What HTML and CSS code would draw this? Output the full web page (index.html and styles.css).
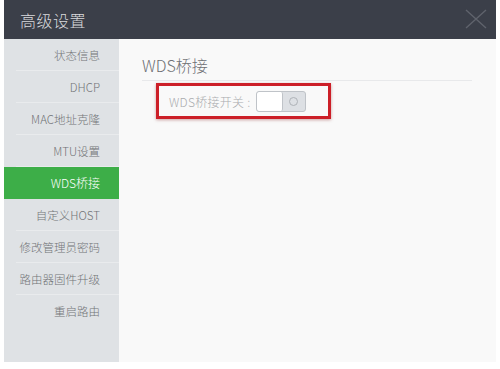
FILE: index.html
```html
<!DOCTYPE html>
<html>
<head>
<meta charset="utf-8">
<link rel="stylesheet" href="styles.css">
</head>
<body>
<div class="dialog">
  <div class="header">
    <span class="title">高级设置</span>
    <span class="close"><svg width="22" height="20" viewBox="0 0 22 20"><path d="M1 1L21 19M21 1L1 19" stroke="#5f636c" stroke-width="1.4" fill="none"/></svg></span>
  </div>
  <div class="main">
    <ul class="menu">
      <li>状态信息</li>
      <li>DHCP</li>
      <li>MAC地址克隆</li>
      <li>MTU设置</li>
      <li class="active">WDS桥接</li>
      <li>自定义HOST</li>
      <li>修改管理员密码</li>
      <li>路由器固件升级</li>
      <li class="last">重启路由</li>
    </ul>
    <div class="content">
      <h2 class="section">WDS桥接</h2>
      <div class="highlight">
        <span class="label">WDS桥接开关 :</span>
        <span class="switch"><span class="knob"></span><span class="off"><span class="ring"></span></span></span>
      </div>
    </div>
  </div>
</div>
</body>
</html>
```
FILE: styles.css
```css
html, body { margin: 0; padding: 0; background: #ffffff; }
body { font-family: "Microsoft YaHei", "Noto Sans CJK SC", "Liberation Sans", sans-serif; font-weight: 300; width: 500px; height: 369px; overflow: hidden; }
.dialog { margin: 0 4px; width: 492px; }
.header { height: 39px; background: #3b3f49; display: flex; align-items: center; justify-content: space-between; padding: 0 9px 0 16px; box-sizing: border-box; }
.title { color: #d9dadd; font-size: 16px; letter-spacing: 0.5px; }
.close { display: flex; width: 22px; height: 20px; margin-top: -2px; }
.main { display: flex; height: 323px; background: #f9f9f9; }
.menu { list-style: none; margin: 0; padding: 0; width: 115px; background: #dfe2e5; }
.menu li { height: 32px; line-height: 32px; text-align: right; padding-right: 19px; font-size: 11.5px; color: #727477; border-bottom: 1px solid #e9ebed; margin-left: 12px; box-sizing: border-box; }
.menu li.last { border-bottom: none; }
.menu li.active { background: #3dae48; color: #ffffff; margin-left: 0; border-bottom-color: #3dae48; font-size: 12px; }
.content { flex: 1; padding: 16px 24px 0 23px; }
.section { margin: 0; font-weight: 300; font-size: 16px; color: #6e7074; line-height: 20px; padding-bottom: 5px; border-bottom: 1px solid #e8e9eb; }
.highlight { margin: 2px 0 0 14px; width: 175px; height: 36px; box-sizing: border-box; border: 3px solid #cc1f28; box-shadow: 0 1px 3px rgba(120,0,0,0.35); display: flex; align-items: center; padding-left: 10px; }
.label { font-size: 12px; color: #a9abae; letter-spacing: 0.3px; }
.switch { display: flex; width: 50px; height: 21px; border: 1px solid #bfc3c8; border-radius: 3px; box-sizing: border-box; overflow: hidden; background: #dde0e4; margin-left: 5px; }
.knob { width: 25px; background: #ffffff; border-right: 1px solid #bfc3c8; border-radius: 2px; }
.off { flex: 1; display: flex; align-items: center; justify-content: center; }
.ring { width: 7px; height: 7px; border: 1px solid #aeb2b7; border-radius: 50%; }
```
